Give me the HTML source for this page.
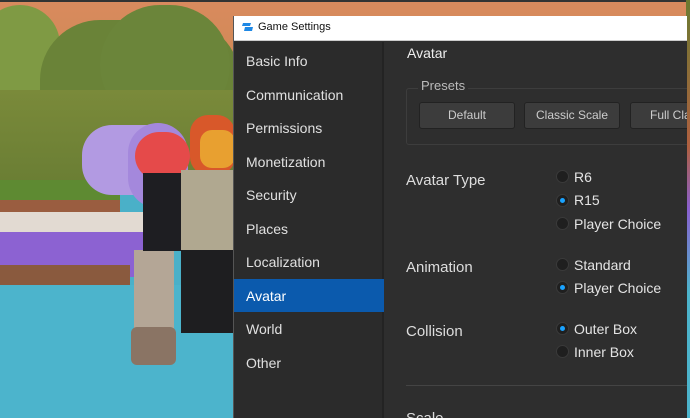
<!DOCTYPE html>
<html style="width:690px;height:418px;overflow:hidden"><head><style>
*{margin:0;padding:0;box-sizing:border-box}
body{width:690px;height:418px;overflow:hidden;position:relative;font-family:"Liberation Sans",sans-serif;background:#4ab0c8}
.a{position:absolute}
.nav{position:absolute;left:12px;font-size:14px;color:#e0e0e0}
.lbl{position:absolute;left:172px;font-size:15px;color:#ddd}
.r{position:absolute;left:322px;width:13px;height:13px;border-radius:50%;background:#1f1f1f;border:1px solid #3a3a3a}
.r.on::after{content:"";position:absolute;left:3px;top:3px;width:5px;height:5px;border-radius:50%;background:#1aa3ff}
.rt{position:absolute;left:340px;font-size:14px;color:#e4e4e4}
.btn{position:absolute;top:86px;width:96px;height:27px;background:#3c3c3c;border:1px solid #222;border-radius:3px;color:#ccc;font-size:12px;text-align:center;line-height:25px;white-space:nowrap;overflow:hidden}
</style></head><body>
<div class="a" style="left:0;top:0;width:690px;height:120px;background:linear-gradient(#d98a5e,#c9884e)"></div>
<div class="a" style="left:0;top:0;width:690px;height:2px;background:#333"></div>
<div class="a" style="left:-20px;top:5px;width:80px;height:110px;border-radius:40px;background:#7f9a44"></div>
<div class="a" style="left:40px;top:20px;width:200px;height:170px;border-radius:60px 60px 0 0;background:#6a8338"></div>
<div class="a" style="left:100px;top:5px;width:130px;height:120px;border-radius:60px;background:#6b853a"></div>
<div class="a" style="left:0;top:90px;width:240px;height:95px;background:linear-gradient(#7a8a3a,#6a7e34)"></div>
<div class="a" style="left:0;top:180px;width:120px;height:22px;background:#5e8a32"></div>
<div class="a" style="left:0;top:200px;width:120px;height:20px;background:#9a5d40"></div>
<div class="a" style="left:0;top:212px;width:160px;height:28px;background:#e2dad2"></div>
<div class="a" style="left:0;top:232px;width:160px;height:45px;background:#8c62d2"></div>
<div class="a" style="left:0;top:265px;width:130px;height:25px;background:#8a5a3e"></div>
<div class="a" style="left:0;top:285px;width:240px;height:133px;background:#4cb4cc"></div>
<div class="a" style="left:82px;top:125px;width:100px;height:70px;border-radius:30px;background:#b29ae2"></div>
<div class="a" style="left:128px;top:123px;width:60px;height:85px;border-radius:30px;background:#a488dc"></div>
<div class="a" style="left:135px;top:132px;width:55px;height:48px;border-radius:25px;background:#e54a4a"></div>
<div class="a" style="left:134px;top:250px;width:40px;height:85px;background:#b4a696"></div>
<div class="a" style="left:131px;top:327px;width:45px;height:38px;border-radius:6px;background:#8a7464"></div>
<div class="a" style="left:190px;top:115px;width:45px;height:60px;border-radius:18px;background:#d8582a"></div>
<div class="a" style="left:200px;top:130px;width:35px;height:38px;border-radius:12px;background:#e8a030"></div>
<div class="a" style="left:143px;top:173px;width:38px;height:78px;background:#1e1e22"></div>
<div class="a" style="left:181px;top:170px;width:54px;height:82px;background:#b0a890"></div>
<div class="a" style="left:181px;top:250px;width:54px;height:83px;background:#1e1e20"></div>
<div class="a" style="left:686px;top:0;width:4px;height:418px;background:linear-gradient(#6a7a30,#b06040 35%,#8a60d0 50%,#4cb4cc 70%)"></div>
<div class="a" style="left:233px;top:16px;width:454px;height:402px;background:#2e2e2e;border-left:1px solid #555;overflow:hidden">
 <div class="a" style="left:0;top:0;width:453px;height:25px;background:#fff;border-bottom:1px solid #ccc"></div>
 <svg class="a" style="left:8px;top:5px" width="12" height="12" viewBox="0 0 12 12"><path d="M1 2h8l-1 3H0z M3 6h8l-1 4H2z" fill="#1e88e5"/></svg>
 <div class="a" style="left:24px;top:5px;font-size:11px;color:#111">Game Settings</div>
 <div class="a" style="left:0;top:26px;width:150px;height:376px;background:#2b2b2b;border-right:2px solid #232323"></div>
 <div class="a" style="left:0;top:263px;width:150px;height:33px;background:#0b5aad"></div>
 <div class="nav" style="top:37px">Basic Info</div>
 <div class="nav" style="top:71px">Communication</div>
 <div class="nav" style="top:104px">Permissions</div>
 <div class="nav" style="top:138px">Monetization</div>
 <div class="nav" style="top:171px">Security</div>
 <div class="nav" style="top:205px">Places</div>
 <div class="nav" style="top:238px">Localization</div>
 <div class="nav" style="top:272px;color:#fff">Avatar</div>
 <div class="nav" style="top:305px">World</div>
 <div class="nav" style="top:339px">Other</div>
 <div class="a" style="left:173px;top:29px;font-size:14px;color:#eee">Avatar</div>
 <div class="a" style="left:172px;top:72px;width:290px;height:57px;border:1px solid #3d3d3d;border-radius:3px"></div>
 <div class="a" style="left:184px;top:62px;padding:0 3px;background:#2e2e2e;font-size:13px;color:#bbb">Presets</div>
 <div class="btn" style="left:185px">Default</div>
 <div class="btn" style="left:290px">Classic Scale</div>
 <div class="btn" style="left:396px;text-align:left;padding-left:19px">Full Classic</div>
 <div class="lbl" style="top:156px">Avatar Type</div>
 <div class="r" style="top:154px"></div><div class="rt" style="top:153px">R6</div>
 <div class="r on" style="top:178px"></div><div class="rt" style="top:176px">R15</div>
 <div class="r" style="top:201px"></div><div class="rt" style="top:200px">Player Choice</div>
 <div class="lbl" style="top:243px">Animation</div>
 <div class="r" style="top:242px"></div><div class="rt" style="top:241px">Standard</div>
 <div class="r on" style="top:265px"></div><div class="rt" style="top:264px">Player Choice</div>
 <div class="lbl" style="top:307px">Collision</div>
 <div class="r on" style="top:306px"></div><div class="rt" style="top:305px">Outer Box</div>
 <div class="r" style="top:329px"></div><div class="rt" style="top:328px">Inner Box</div>
 <div class="a" style="left:172px;top:369px;width:282px;height:1px;background:#444"></div>
 <div class="lbl" style="top:394px">Scale</div>
</div>
</body></html>
